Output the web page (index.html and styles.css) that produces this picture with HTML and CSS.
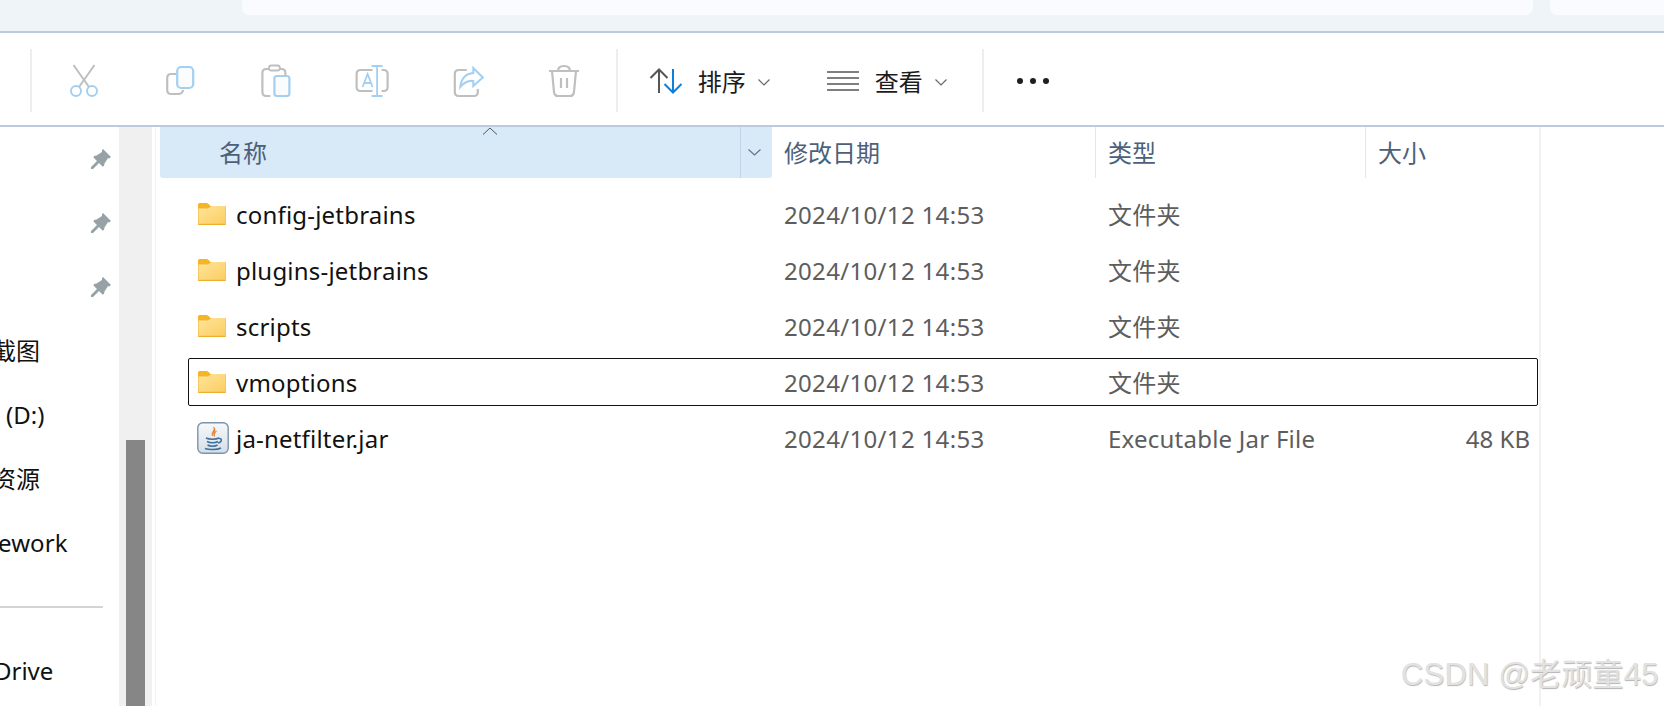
FILE: index.html
```html
<!DOCTYPE html>
<html lang="zh-CN">
<head>
<meta charset="utf-8">
<title>资源管理器</title>
<link rel="stylesheet" href="styles.css">
</head>
<body>
<div class="top-strip">
  <div class="tab tab-main"></div>
  <div class="tab tab-side"></div>
</div>
<div class="toolbar">
  <div class="sep sep-first"></div>
  <div class="tool-group">
    <div class="tool"><svg width="40" height="40" viewBox="64 59 40 40" fill="none" stroke-width="2"><path class="g" d="M73.500 65 L89 87 M94.500 65 L79 87"/><circle class="b" cx="76" cy="91" r="5"/><circle class="b" cx="92" cy="91" r="5"/></svg></div>
    <div class="tool"><svg width="40" height="40" viewBox="159.800 59 40 40" fill="none" stroke-width="2.200"><path class="g" d="M176 74 H171 Q167 74 167 78 V90 Q167 94 171 94 H178 Q182 94 183 90"/><rect class="b" x="177" y="67" width="16" height="21" rx="4" fill="#fbfcfe"/></svg></div>
    <div class="tool"><svg width="40" height="40" viewBox="255.600 59 40 40" fill="none" stroke-width="2.200"><path class="g" d="M271 96 H267 Q263 96 263 92 V73 Q263 69 267 69 H282 Q286 69 286 73 V75"/><rect class="g" x="269.500" y="65.500" width="11" height="5" rx="2.500" fill="#fff" stroke-width="1.800"/><rect class="b" x="275" y="76" width="15" height="20" rx="2.500" fill="#fbfcfe"/></svg></div>
    <div class="tool"><svg width="40" height="40" viewBox="351.400 59 40 40" fill="none" stroke-width="2.200"><path class="g" d="M373 70 H361 Q357 70 357 74 V87 Q357 91 361 91 H373 M382 70 H384 Q388 70 388 74 V87 Q388 91 384 91 H382"/><path class="b" d="M377.500 66 V96 M372 66 H383 M372 96 H383 M363 87 L368 74 L373 87 M364.500 83 H371.500" stroke-width="1.800"/></svg></div>
    <div class="tool"><svg width="40" height="40" viewBox="447.200 59 40 40" fill="none" stroke-width="2.200"><path class="g" d="M467 70 H459 Q455 70 455 74 V92 Q455 96 459 96 H474 Q478 96 478 92 V89"/><path class="b" d="M473.500 68 L483 77.500 L473.500 86 V81 Q466 80 460.500 87 Q462 74 473.500 73 Z" stroke-width="2"/></svg></div>
    <div class="tool"><svg width="40" height="40" viewBox="543 59 40 40" fill="none" stroke-width="2.200"><path class="g" d="M549 71 H579 M558 71 Q558 66 564 66 Q570 66 570 71 M552 71 L554 92 Q554.500 96 558 96 H570 Q573.500 96 574 92 L576 71 M561 78 V88 M567 78 V88"/></svg></div>
  </div>
  <div class="sep sep-second"></div>
  <div class="menu-btn menu-sort">
    <svg width="34" height="26" viewBox="649 68 34 26" fill="none" stroke-width="2"><path stroke="#555" d="M659 93 V69.500 M650.500 78 L659 69.500 L667.500 78"/><path stroke="#0f7fd6" d="M673 69 V92.500 M664.500 84 L673 92.500 L681.500 84"/></svg>
    <span class="menu-label">排序</span>
    <svg class="chev" width="12" height="7" viewBox="0 0 12 7" fill="none"><path d="M.5.500 6 6l5.500-5.500" stroke="#666" stroke-width="1.200"/></svg>
  </div>
  <div class="menu-btn menu-view">
    <svg width="32" height="20" viewBox="0 0 32 20" fill="none" stroke="#555" stroke-width="1.500"><path d="M0 1H32M0 7H32M0 13H32M0 19H32"/></svg>
    <span class="menu-label">查看</span>
    <svg class="chev" width="12" height="7" viewBox="0 0 12 7" fill="none"><path d="M.5.500 6 6l5.500-5.500" stroke="#666" stroke-width="1.200"/></svg>
  </div>
  <div class="sep sep-third"></div>
  <div class="dots"><i></i><i></i><i></i></div>
</div>
<div class="main">
  <nav class="nav">
    <div class="nav-row pin-row"><svg class="pin" width="22" height="22" viewBox="0 0 22 22"><path d="M13 1 21 9 19 10.500 18 10 14.500 15.500 14 18 12.500 18.500 9 15 3 21 1 21 1 19 7 13 3.500 9.500 4 8 6.500 7.500 12 4 12 2Z"/></svg></div>
    <div class="nav-row pin-row"><svg class="pin" width="22" height="22" viewBox="0 0 22 22"><path d="M13 1 21 9 19 10.500 18 10 14.500 15.500 14 18 12.500 18.500 9 15 3 21 1 21 1 19 7 13 3.500 9.500 4 8 6.500 7.500 12 4 12 2Z"/></svg></div>
    <div class="nav-row pin-row"><svg class="pin" width="22" height="22" viewBox="0 0 22 22"><path d="M13 1 21 9 19 10.500 18 10 14.500 15.500 14 18 12.500 18.500 9 15 3 21 1 21 1 19 7 13 3.500 9.500 4 8 6.500 7.500 12 4 12 2Z"/></svg></div>
    <div class="nav-row"><span class="clip-8">截图</span></div>
    <div class="nav-row"><span class="indent-6">(D:)</span></div>
    <div class="nav-row"><span class="clip-8">资源</span></div>
    <div class="nav-row"><span class="clip-2">ework</span></div>
    <div class="nav-divider"></div>
    <div class="nav-row"><span class="clip-5">Drive</span></div>
  </nav>
  <div class="scrollbar"><div class="thumb"></div></div>
  <section class="content">
    <div class="head">
      <div class="hcol hname">
        <span>名称</span>
        <svg class="sort-caret" width="16" height="8" viewBox="0 0 16 8" fill="none"><path d="M1 7.500 8 1l7 6.500" stroke="#555" stroke-width="1"/></svg>
        <div class="hdrop"><svg width="13" height="7" viewBox="0 0 13 7" fill="none"><path d="M.5.500 6.500 6l6-5.500" stroke="#5f7488" stroke-width="1.100"/></svg></div>
      </div>
      <div class="hcol hdate">修改日期</div>
      <div class="hcol htype">类型</div>
      <div class="hcol hsize">大小</div>
    </div>
    <div class="rows">
      <div class="row">
        <svg class="ficon" width="28" height="22" viewBox="0 0 28 22"><use href="#folder"/></svg>
        <span class="fname">config-jetbrains</span><span class="fdate">2024/10/12 14:53</span><span class="ftype">文件夹</span>
      </div>
      <div class="row">
        <svg class="ficon" width="28" height="22" viewBox="0 0 28 22"><use href="#folder"/></svg>
        <span class="fname">plugins-jetbrains</span><span class="fdate">2024/10/12 14:53</span><span class="ftype">文件夹</span>
      </div>
      <div class="row">
        <svg class="ficon" width="28" height="22" viewBox="0 0 28 22"><use href="#folder"/></svg>
        <span class="fname">scripts</span><span class="fdate">2024/10/12 14:53</span><span class="ftype">文件夹</span>
      </div>
      <div class="row focused">
        <svg class="ficon" width="28" height="22" viewBox="0 0 28 22"><use href="#folder"/></svg>
        <span class="fname">vmoptions</span><span class="fdate">2024/10/12 14:53</span><span class="ftype">文件夹</span>
      </div>
      <div class="row">
        <svg class="jicon" width="32" height="32" viewBox="0 0 32 32" fill="none">
          <defs><linearGradient id="jbg" x1="0" y1="0" x2="0" y2="1"><stop offset="0" stop-color="#f7f9fb"/><stop offset="1" stop-color="#d5dee6"/></linearGradient></defs>
          <rect x=".8" y=".8" width="30.400" height="30.400" rx="5" fill="url(#jbg)" stroke="#7d93a8" stroke-width="1.400"/>
          <path d="M16.500 5 C19 8 13.500 10 15.500 14 C14 10.500 21 9.500 16.500 5Z M19.500 9 C16.500 10.500 16 12.500 17.500 14.500 C16.800 12.500 18 11 19.500 9Z" fill="#e2761b" stroke="#e2761b" stroke-width=".6"/>
          <path d="M9 16 C12 17.500 19 17.500 22 16 M10 19.500 C13 21 18 21 21 19.500 M10.500 23 C13 24.500 18 24.500 20.500 23 M8 26.500 C12 28 20 28 24 26 M22 16.500 C25 16 25.500 20 21 21" stroke="#3f6f9c" stroke-width="1.500"/>
        </svg>
        <span class="fname">ja-netfilter.jar</span><span class="fdate">2024/10/12 14:53</span><span class="ftype">Executable Jar File</span><span class="fsize">48 KB</span>
      </div>
    </div>
  </section>
</div>
<div class="watermark">CSDN @老顽童45</div>
<svg class="defs" width="0" height="0">
  <defs>
    <linearGradient id="fbody" x1="0" y1="0" x2="1" y2="1"><stop offset="0" stop-color="#fee59a"/><stop offset="1" stop-color="#fccc60"/></linearGradient>
    <symbol id="folder" viewBox="0 0 28 22">
      <path d="M0 1.500Q0 0 1.500 0H8.500Q10 0 11 1.500L13 3.500H28V8H0Z" fill="#f7b526"/>
      <path d="M0 5.500H10L13 3.500H28V22H0Z" fill="url(#fbody)"/>
      <rect y="20.800" width="28" height="1.200" fill="#edaf2e"/>
      <rect x="27.200" y="3.500" width=".8" height="18.500" fill="#f3c356"/>
      <rect y="5" width=".8" height="17" fill="#f3c356"/>
    </symbol>
  </defs>
</svg>
</body>
</html>
```
FILE: styles.css
```css
* { box-sizing: border-box; }
html, body { margin: 0; height: 100%; }
body {
  width: 1664px;
  height: 706px;
  overflow: hidden;
  position: relative;
  background: #fff;
  font-family: "Noto Sans", "Noto Sans CJK SC", sans-serif;
  font-size: 24px;
  color: #111;
}
.top-strip {
  height: 33px;
  background: #eff4f9;
  border-bottom: 2px solid #bccadb;
  display: flex;
  padding-left: 242px;
  gap: 17px;
}
.tab { height: 15px; background: #f9fbfe; border-radius: 0 0 7px 7px; }
.tab-main { width: 1291px; }
.tab-side { flex: 1; border-bottom-right-radius: 0; }

.toolbar {
  height: 94px;
  border-bottom: 2px solid #bccadb;
  display: flex;
  align-items: center;
  padding-left: 30px;
}
.sep { width: 2px; height: 63px; background: #eeeeee; flex: none; align-self: flex-start; margin-top: 16px; }
.tool-group { display: flex; margin: 0 5px 0 4px; }
.tool { width: 95.8px; display: flex; justify-content: center; }
.g { stroke: #bfbfbf; }
.b { stroke: #a3d0f2; }
.menu-btn { display: flex; align-items: center; color: #1c1c1c; height: 40px; margin-top: 4px; }
.menu-sort { margin-left: 31px; gap: 15px; }
.menu-view { margin-left: 57px; gap: 16px; }
.menu-label { line-height: 34px; margin-top: 2px; }
.chev { margin-left: -3px; margin-top: 2px; }
.menu-sort .chev { margin-left: -3px; }
.menu-view .chev { margin-left: -4px; }
.sep-third { margin-left: 35px; }
.dots { display: flex; gap: 7px; margin-left: 33px; margin-top: 4px; }
.dots i { width: 6px; height: 6px; border-radius: 50%; background: #1f1f1f; }

.main { display: flex; height: 579px; }
.nav { width: 119px; overflow: hidden; flex: none; }
.nav-row { height: 64px; display: flex; align-items: center; line-height: 32px; white-space: nowrap; }
.pin-row { justify-content: flex-end; padding-right: 7px; }
.pin path { fill: #96a1a8; }
.clip-8 { margin-left: -8px; }
.clip-2 { margin-left: -2px; letter-spacing: .1px; }
.clip-5 { margin-left: -6px; }
.indent-6 { margin-left: 6px; }
.nav-divider { width: 103px; height: 2px; background: #d5d5d5; margin: 31px 0 31px; }

.scrollbar { width: 33px; flex: none; background: #f0f0f0; padding: 313px 7px 0; }
.thumb { height: 100%; background: #868686; }

.content {
  width: 1386px;
  margin-left: 3px;
  flex: none;
  border-left: 1px solid #f3f3f3;
  border-right: 2px solid #f2f2f2;
  padding-left: 4px;
}
.head { display: flex; height: 51px; color: #4c607a; }
.hcol { display: flex; align-items: center; position: relative; line-height: 34px; flex: none; padding-top: 1px; }
.hname {
  width: 612px;
  padding-left: 59px;
  background: #d8e9f8;
  border-radius: 0 0 3px 3px;
}
.sort-caret { position: absolute; left: 322px; top: 0; }
.hdrop {
  position: absolute;
  right: 0; top: 0; bottom: 0;
  width: 32px;
  padding-right: 5px;
  border-left: 1px solid #c3d6e8;
  display: flex;
  align-items: center;
  justify-content: center;
}
.hdate { width: 324px; padding-left: 12px; border-right: 1px solid #e6e6e6; }
.htype { width: 270px; padding-left: 12px; border-right: 1px solid #e6e6e6; }
.hsize { width: 173px; padding-left: 12px; }

.rows { display: flex; flex-direction: column; gap: 8px; padding: 12px 0 0 28px; width: 1378px; }
.row {
  height: 48px;
  display: grid;
  grid-template-columns: 38px 548px 324px 1fr auto;
  align-items: center;
  border: 1px solid transparent;
  padding: 0 7px 0 9px;
  line-height: 34px;
  white-space: nowrap;
}
.row span { padding-top: 2px; }
.focused { border-color: #111; border-radius: 2px; }
.jicon { margin-left: -1px; }
.ficon, .jicon { display: block; }
.fname { letter-spacing: .2px; }
.fdate { color: #5d5d5d; letter-spacing: .33px; }
.ftype { color: #5d5d5d; letter-spacing: .23px; }
.fsize { color: #5d5d5d; }
.watermark {
  position: absolute;
  left: 1401px;
  top: 656px;
  font-family: "Liberation Sans", "Noto Sans CJK SC", sans-serif;
  font-size: 31px;
  letter-spacing: .2px;
  line-height: 38px;
  color: #e2e2e2;
  text-shadow: .6px .6px 1px #b4b4b4;
  white-space: nowrap;
}
.defs { position: absolute; }
```
